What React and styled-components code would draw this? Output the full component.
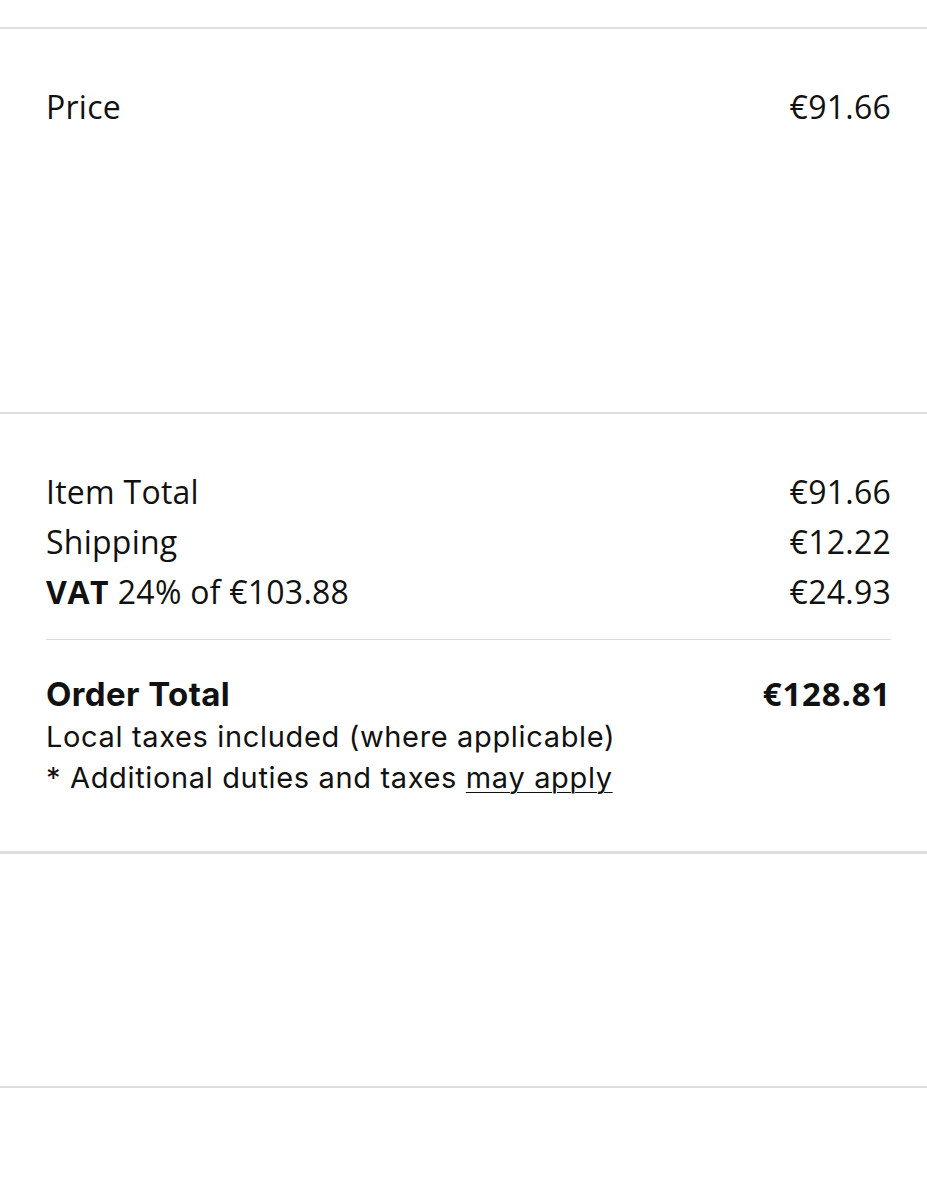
import React from "react";
import styled, { createGlobalStyle } from "styled-components";

const Global = createGlobalStyle`
  html, body { margin: 0; padding: 0; background: #fff; }
  body { font-family: "Open Sans", "Noto Sans", sans-serif; color: #111; }
`;

const Page = styled.div`
  display: flex;
  flex-direction: column;
  padding-top: 27px;
  min-height: 1200px;
  box-sizing: border-box;
`;

const Rule = styled.hr`
  margin: 0;
  border: 0;
  height: ${(p) => p.$h || 2}px;
  background: #dedede;
`;

const Section = styled.section`
  height: ${(p) => p.$h}px;
  box-sizing: border-box;
  padding: ${(p) => p.$pt || 0}px 36px 0 46px;
  display: flex;
  flex-direction: column;
`;

const Row = styled.div`
  display: flex;
  justify-content: space-between;
  align-items: baseline;
  font-family: "Open Sans", "Noto Sans", sans-serif;
  font-size: 32px;
  line-height: 50px;
  letter-spacing: 0.25px;
`;

const Strong = styled.b`
  font-weight: 700;
  letter-spacing: 0.6px;
`;

const Divider = styled.div`
  height: 1px;
  background: #dcdcdc;
  margin: 22px 0 0;
`;

const TotalRow = styled.div`
  display: flex;
  justify-content: space-between;
  align-items: baseline;
  margin-top: 32px;
  line-height: 44px;
`;

const TotalLabel = styled.span`
  font-family: Inter, Roboto, sans-serif;
  font-weight: 700;
  font-size: 33px;
  letter-spacing: 0.4px;
`;

const TotalValue = styled.span`
  font-family: "Open Sans", sans-serif;
  font-weight: 700;
  font-size: 33px;
  letter-spacing: 0.8px;
`;

const Note = styled.div`
  font-family: Inter, Roboto, sans-serif;
  font-size: 29px;
  line-height: 41px;
  letter-spacing: 0.65px;
  color: #111;
`;

const Link = styled.a`
  color: inherit;
  text-decoration: underline;
  text-underline-offset: 4px;
  text-decoration-thickness: 1px;
`;

export default function App() {
  return (
    <>
      <Global />
      <Page>
        <Rule />
        <Section $h={383} $pt={53}>
          <Row>
            <span>Price</span>
            <span>€91.66</span>
          </Row>
        </Section>
        <Rule />
        <Section $h={437} $pt={53}>
          <Row>
            <span>Item Total</span>
            <span>€91.66</span>
          </Row>
          <Row>
            <span>Shipping</span>
            <span>€12.22</span>
          </Row>
          <Row>
            <span>
              <Strong>VAT</Strong> 24% of €103.88
            </span>
            <span>€24.93</span>
          </Row>
          <Divider />
          <TotalRow>
            <TotalLabel>Order Total</TotalLabel>
            <TotalValue>€128.81</TotalValue>
          </TotalRow>
          <Note>Local taxes included (where applicable)</Note>
          <Note>
            * Additional duties and taxes <Link href="#">may apply</Link>
          </Note>
        </Section>
        <Rule $h={3} />
        <Section $h={232} />
        <Rule />
      </Page>
    </>
  );
}
